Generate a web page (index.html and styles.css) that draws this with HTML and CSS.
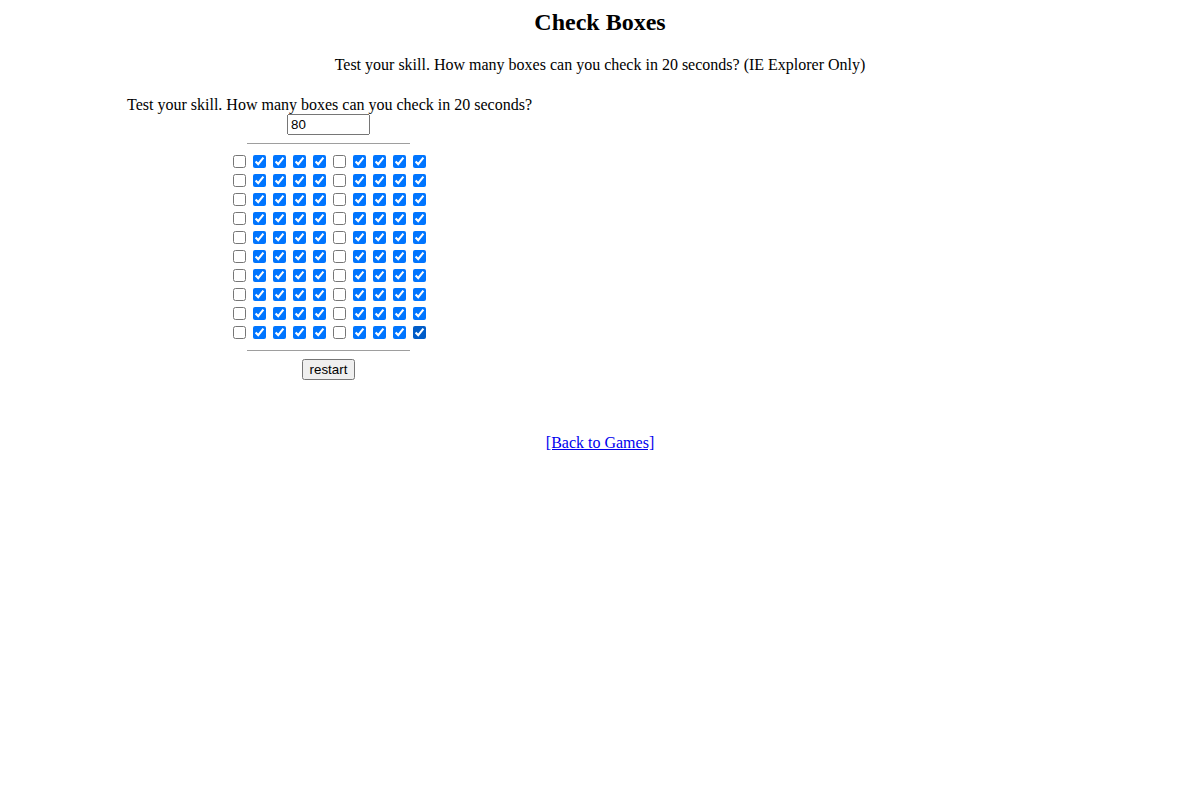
FILE: index.html
```html
<!DOCTYPE html>
<html>
<head>
<meta charset="utf-8">
<title>Check Boxes</title>
<link rel="stylesheet" href="styles.css">
</head>
<body>
<h2 class="title">Check Boxes</h2>
<p class="intro">Test your skill. How many boxes can you check in 20 seconds? (IE Explorer Only)</p>
<form class="game">
  <div class="prompt">Test your skill. How many boxes can you check in 20 seconds?</div>
  <input class="count" type="text" value="80">
  <hr class="rule">
  <div class="grid">
    <input type="checkbox"><input type="checkbox" checked><input type="checkbox" checked><input type="checkbox" checked><input type="checkbox" checked><input type="checkbox"><input type="checkbox" checked><input type="checkbox" checked><input type="checkbox" checked><input type="checkbox" checked>
    <input type="checkbox"><input type="checkbox" checked><input type="checkbox" checked><input type="checkbox" checked><input type="checkbox" checked><input type="checkbox"><input type="checkbox" checked><input type="checkbox" checked><input type="checkbox" checked><input type="checkbox" checked>
    <input type="checkbox"><input type="checkbox" checked><input type="checkbox" checked><input type="checkbox" checked><input type="checkbox" checked><input type="checkbox"><input type="checkbox" checked><input type="checkbox" checked><input type="checkbox" checked><input type="checkbox" checked>
    <input type="checkbox"><input type="checkbox" checked><input type="checkbox" checked><input type="checkbox" checked><input type="checkbox" checked><input type="checkbox"><input type="checkbox" checked><input type="checkbox" checked><input type="checkbox" checked><input type="checkbox" checked>
    <input type="checkbox"><input type="checkbox" checked><input type="checkbox" checked><input type="checkbox" checked><input type="checkbox" checked><input type="checkbox"><input type="checkbox" checked><input type="checkbox" checked><input type="checkbox" checked><input type="checkbox" checked>
    <input type="checkbox"><input type="checkbox" checked><input type="checkbox" checked><input type="checkbox" checked><input type="checkbox" checked><input type="checkbox"><input type="checkbox" checked><input type="checkbox" checked><input type="checkbox" checked><input type="checkbox" checked>
    <input type="checkbox"><input type="checkbox" checked><input type="checkbox" checked><input type="checkbox" checked><input type="checkbox" checked><input type="checkbox"><input type="checkbox" checked><input type="checkbox" checked><input type="checkbox" checked><input type="checkbox" checked>
    <input type="checkbox"><input type="checkbox" checked><input type="checkbox" checked><input type="checkbox" checked><input type="checkbox" checked><input type="checkbox"><input type="checkbox" checked><input type="checkbox" checked><input type="checkbox" checked><input type="checkbox" checked>
    <input type="checkbox"><input type="checkbox" checked><input type="checkbox" checked><input type="checkbox" checked><input type="checkbox" checked><input type="checkbox"><input type="checkbox" checked><input type="checkbox" checked><input type="checkbox" checked><input type="checkbox" checked>
    <input type="checkbox"><input type="checkbox" checked><input type="checkbox" checked><input type="checkbox" checked><input type="checkbox" checked><input type="checkbox"><input type="checkbox" checked><input type="checkbox" checked><input type="checkbox" checked><input type="checkbox" class="active" checked>
  </div>
  <hr class="rule">
  <button class="restart" type="button">restart</button>
</form>
<p class="back"><a href="#">[Back to Games]</a></p>
</body>
</html>
```

FILE: styles.css
```css
body {
  margin: 8px;
  font-family: "Liberation Serif", "Times New Roman", serif;
  font-size: 16px;
  color: #000;
  background: #fff;
}

.title {
  margin: 1px 0 20px;
  font-size: 24px;
  font-weight: bold;
  text-align: center;
}

.intro {
  margin: 0 0 22px;
  text-align: center;
}

.game {
  display: flex;
  flex-direction: column;
  align-items: center;
  width: fit-content;
  margin: 0 0 0 119px;
}

.prompt {
  margin-right: -2px;
}

.count {
  width: 75px;
  height: 15px;
  margin: 0;
  font-family: "Liberation Sans", Arial, sans-serif;
  font-size: 13.33px;
}

.rule {
  width: 163px;
  height: 0;
  margin: 8px auto;
  border: 0;
  border-top: 1px solid #9e9e9e;
}

.grid {
  display: grid;
  grid-template-columns: repeat(10, 20px);
  grid-auto-rows: 19px;
}

.grid input {
  width: 13px;
  height: 13px;
  margin: 3px 3px 3px 4px;
}

.grid .active {
  accent-color: #005cc8;
}

.restart {
  margin: 0;
  font-family: "Liberation Sans", Arial, sans-serif;
  font-size: 13.33px;
}

.back {
  margin: 54px 0 0;
  text-align: center;
}

.back a {
  color: #0000ee;
}
```
